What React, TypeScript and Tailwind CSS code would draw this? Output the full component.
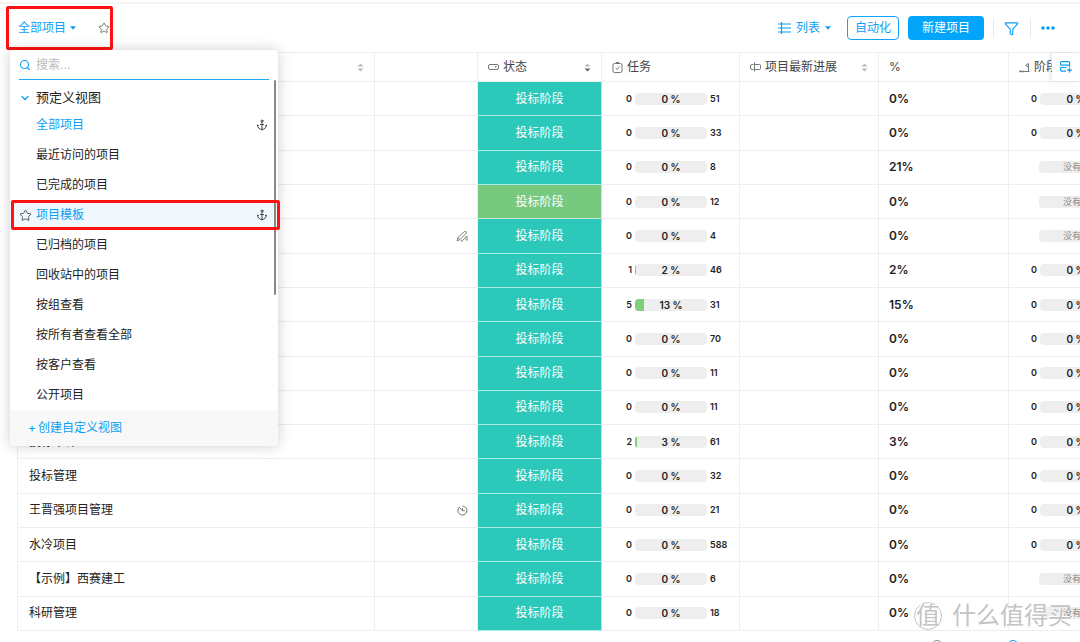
import { useState, type ReactNode } from 'react';
import { Anchor, ChevronDown, Filter, Search, Star } from 'lucide-react';

type Row = {
  name: string;
  done: number;
  percent: number;
  open: number;
  overall: number;
  stage: boolean;
  mark?: 'draft' | 'clock';
  tone?: 'green';
};

const ROWS: Row[] = [
  { name: '', done: 0, percent: 0, open: 51, overall: 0, stage: true },
  { name: '', done: 0, percent: 0, open: 33, overall: 0, stage: true },
  { name: '', done: 0, percent: 0, open: 8, overall: 21, stage: false },
  { name: '', done: 0, percent: 0, open: 12, overall: 0, stage: false, tone: 'green' },
  { name: '', done: 0, percent: 0, open: 4, overall: 0, stage: false, mark: 'draft' },
  { name: '', done: 1, percent: 2, open: 46, overall: 2, stage: true },
  { name: '', done: 5, percent: 13, open: 31, overall: 15, stage: true },
  { name: '', done: 0, percent: 0, open: 70, overall: 0, stage: true },
  { name: '', done: 0, percent: 0, open: 11, overall: 0, stage: true },
  { name: '', done: 0, percent: 0, open: 11, overall: 0, stage: true },
  { name: '投标审计', done: 2, percent: 3, open: 61, overall: 3, stage: true },
  { name: '投标管理', done: 0, percent: 0, open: 32, overall: 0, stage: true },
  { name: '王晋强项目管理', done: 0, percent: 0, open: 21, overall: 0, stage: true, mark: 'clock' },
  { name: '水冷项目', done: 0, percent: 0, open: 588, overall: 0, stage: true },
  { name: '【示例】西赛建工', done: 0, percent: 0, open: 6, overall: 0, stage: false },
  { name: '科研管理', done: 0, percent: 0, open: 18, overall: 0, stage: false },
];

const VIEWS = [
  '全部项目',
  '最近访问的项目',
  '已完成的项目',
  '项目模板',
  '已归档的项目',
  '回收站中的项目',
  '按组查看',
  '按所有者查看全部',
  '按客户查看',
  '公开项目',
];

const CELL = 'border-b border-r border-[#eee] p-0';

export default function App() {
  const [query, setQuery] = useState('');
  const [hovered, setHovered] = useState('项目模板');

  return (
    <div className="relative flex h-screen flex-col overflow-hidden bg-white font-['Inter','Noto_Sans_CJK_SC',sans-serif] text-xs text-[#222]">
      {/* Toolbar */}
      <header className="flex h-[52px] flex-shrink-0 flex-col">
        <div className="h-[4px] border-b-2 border-[#f5f5f5]" />
        <div className="flex flex-1 items-center pl-[6px] pr-[25px]">
          {/* View switcher with its dropdown */}
          <div className="relative flex h-[44px] w-[107px] items-center justify-between rounded-xs border-[3px] border-[#ff1111] pl-[9px]">
            <button type="button" className="flex items-center gap-1 text-[#0a9ff5]">
              全部项目
              <Caret />
            </button>
            <button type="button" aria-label="收藏">
              <Star size={12} strokeWidth={1.8} className="text-[#666]" />
            </button>
            <ViewMenu query={query} onQuery={setQuery} active={hovered} onHover={setHovered} />
          </div>

          <div className="ml-auto flex items-center">
            <button type="button" className="flex items-center gap-[5px] text-[#0a9ff5]">
              <ListIcon />
              列表
              <Caret />
            </button>
            <button
              type="button"
              className="ml-4 h-6 rounded border border-[#12a5f7] px-[7px] text-[#0a9ff5]"
            >
              自动化
            </button>
            <button type="button" className="ml-[9px] h-6 rounded bg-[#03a5fb] px-[14px] text-white">
              新建项目
            </button>
            <span className="ml-[9px] h-5 w-px bg-[#ececec]" />
            <button type="button" aria-label="筛选" className="ml-[10px] text-[#0a9ff5]">
              <Filter size={15} strokeWidth={1.8} />
            </button>
            <span className="ml-[11px] h-5 w-px bg-[#ececec]" />
            <button type="button" aria-label="更多" className="ml-[10px] text-[#0a9ff5]">
              <svg width="14" height="4" viewBox="0 0 14 4" fill="currentColor">
                <circle cx="2" cy="2" r="1.8" />
                <circle cx="7" cy="2" r="1.8" />
                <circle cx="12" cy="2" r="1.8" />
              </svg>
            </button>
          </div>
        </div>
      </header>

      {/* Project table */}
      <main className="relative ml-[17px] min-h-0 flex-1 overflow-hidden">
        <table className="h-full w-[calc(100%+67px)] table-fixed border-separate border-spacing-0 border-l border-t border-[#eee]">
          <colgroup>
            <col />
            <col className="w-[103px]" />
            <col className="w-[124px]" />
            <col className="w-[138px]" />
            <col className="w-[139px]" />
            <col className="w-[130px]" />
            <col className="w-[138px]" />
          </colgroup>
          <thead>
            <tr className="h-[29px] text-left text-[#444]">
              <HeadCell sort="both" />
              <HeadCell />
              <HeadCell icon={<StatusIcon />} label="状态" sort="down" />
              <HeadCell icon={<TaskIcon />} label="任务" />
              <HeadCell icon={<FieldIcon />} label="项目最新进展" sort="both" />
              <HeadCell label="%" />
              <HeadCell icon={<PhaseIcon />} label="阶段" />
            </tr>
          </thead>
          <tbody>
            {ROWS.map((row, i) => (
              <tr key={i}>
                <td className={`${CELL} pl-[11px]!`}>{row.name}</td>
                <td className={`${CELL} pr-[9px]!`}>
                  <div className="flex justify-end text-[#777]">
                    {row.mark === 'draft' && <DraftIcon />}
                    {row.mark === 'clock' && <ClockIcon />}
                  </div>
                </td>
                <td
                  className={`border-b border-r border-white/60 p-0 text-center text-white ${
                    row.tone === 'green' ? 'bg-[#76c97e]' : 'bg-[#2cc8ba]'
                  }`}
                >
                  投标阶段
                </td>
                <td className={CELL}>
                  <Progress done={row.done} percent={row.percent} open={row.open} />
                </td>
                <td className={CELL} />
                <td className={`${CELL} pl-[10px]! font-semibold`}>{row.overall}%</td>
                <td className={CELL}>
                  {row.stage ? (
                    <Progress done={0} percent={0} />
                  ) : (
                    <div className="ml-[30px] h-3 w-[72px] rounded bg-[#eee] pl-6 text-[9px] leading-3 text-[#888]">
                      没有
                    </div>
                  )}
                </td>
              </tr>
            ))}
          </tbody>
        </table>
        {/* Column settings, pinned over the last header cell */}
        <button
          type="button"
          aria-label="管理列"
          className="absolute right-0 top-px flex h-7 w-7 items-center bg-white pl-2 text-[#0a9ff5] shadow-[-2px_0_4px_rgba(0,0,0,0.1)]"
        >
          <ColumnsIcon />
        </button>
      </main>

      {/* Bottom bar, mostly below the fold */}
      <footer className="flex h-[11px] flex-shrink-0 items-start justify-end gap-16 overflow-hidden pr-[61px] pt-[9px]">
        <span className="h-3 w-3 flex-shrink-0 rounded-full border border-[#888]" />
        <span className="h-3 w-3 flex-shrink-0 rounded-full border border-[#0a9ff5]" />
      </footer>

      <Watermark />
    </div>
  );
}

// --- view menu ---------------------------------------------------------------

function ViewMenu({
  query,
  onQuery,
  active,
  onHover,
}: {
  query: string;
  onQuery: (v: string) => void;
  active: string;
  onHover: (v: string) => void;
}) {
  return (
    <div className="absolute left-px top-[41px] z-10 w-[268px] rounded bg-white shadow-[0_0_14px_rgba(0,0,0,0.2)]">
      <label className="mx-[9px] flex h-[30px] items-center gap-[5px] border-b border-[#1ea7f5]">
        <Search size={12} strokeWidth={2.2} className="flex-shrink-0 text-[#0a9ff5]" />
        <input
          type="text"
          value={query}
          onChange={(e) => onQuery(e.target.value)}
          placeholder="搜索..."
          aria-label="搜索"
          className="w-full bg-transparent outline-none placeholder:text-[#bbb]"
        />
      </label>
      <div className="relative">
        <button type="button" className="flex h-[30px] w-full items-center gap-[5px] pl-[9px] pt-1.5 text-[13px]">
          <ChevronDown size={12} strokeWidth={2.5} className="text-[#0a9ff5]" />
          预定义视图
        </button>
        <ul>
          {VIEWS.map((view) => {
            const current = view === '全部项目';
            const isActive = view === active;
            return (
              <li key={view} className="relative">
                <button
                  type="button"
                  onMouseEnter={() => onHover(view)}
                  className={`flex h-[30px] w-full items-center pl-[9px] pr-[10px] ${
                    isActive ? 'bg-[#f0f8fe]' : ''
                  } ${isActive || current ? 'text-[#0a9ff5]' : ''}`}
                >
                  <span className="w-[17px] text-[#555]">
                    {isActive && <Star size={13} strokeWidth={1.8} />}
                  </span>
                  {view}
                  {(isActive || current) && (
                    <Anchor size={12} strokeWidth={2} className="ml-auto text-[#444]" />
                  )}
                </button>
                {isActive && (
                  <span className="pointer-events-none absolute inset-y-0 -right-0.5 left-px z-10 rounded-xs border-[3px] border-[#ff1111]" />
                )}
              </li>
            );
          })}
        </ul>
        {/* Scroll thumb */}
        <span className="absolute right-0.5 top-0 h-[215px] w-0.5 rounded bg-[#888]" />
      </div>
      <button
        type="button"
        className="flex h-9 w-full items-center gap-0.5 rounded-b bg-[#f8f8f8] pl-[18px] text-[#0a9ff5]"
      >
        <span>+</span>
        <span>创建自定义视图</span>
      </button>
    </div>
  );
}

// --- table parts ---------------------------------------------------------------

function HeadCell({
  icon,
  label,
  sort,
}: {
  icon?: ReactNode;
  label?: string;
  sort?: 'both' | 'down';
}) {
  return (
    <th className={`${CELL} font-normal`}>
      <div className="flex items-center gap-1 px-[10px]">
        {icon && <span className="flex-shrink-0 text-[#777]">{icon}</span>}
        <span className="whitespace-nowrap">{label}</span>
        {sort && (
          <svg width="7" height="9" viewBox="0 0 7 9" className="ml-auto">
            <path d="M3.5 0.5L6.500 3.5h-6z" fill="#bbb" />
            <path d="M3.5 8.5L6.500 5.5h-6z" fill={sort === 'down' ? '#666' : '#bbb'} />
          </svg>
        )}
      </div>
    </th>
  );
}

/** Done count, bar with the percentage on it, open count. */
function Progress({ done, percent, open }: { done: number; percent: number; open?: number }) {
  return (
    <div className="flex items-center gap-[3px] text-[9px] font-semibold">
      <span className={open === undefined ? 'w-7 text-right' : 'w-[30px] text-right'}>{done}</span>
      <div className="relative h-3 w-[72px] flex-shrink-0 overflow-hidden rounded bg-[#eee]">
        <div className="h-full bg-[#7fce7a]" style={{ width: `${percent}%` }} />
        <span className="absolute inset-0 text-center text-[10px] leading-3">{percent} %</span>
      </div>
      <span>{open}</span>
    </div>
  );
}

function Watermark() {
  return (
    <div className="pointer-events-none absolute bottom-2 right-2 flex items-center gap-2.5 text-2xl leading-9 text-[#c4c4c4] [text-shadow:-1px_-1px_0_#fff]">
      <span className="flex h-7 w-7 items-center justify-center rounded-full border border-[#c4c4c4]">
        值
      </span>
      <span>什么值得买</span>
    </div>
  );
}

// --- icons ---------------------------------------------------------------

function Caret() {
  return (
    <svg width="6" height="4" viewBox="0 0 6 4" fill="currentColor">
      <path d="M0 0.3h6L3 3.8z" />
    </svg>
  );
}

function ListIcon() {
  return (
    <svg width="13" height="12" viewBox="0 0 13 12" fill="none" stroke="currentColor" strokeWidth="1.2">
      <path d="M0 2h13M0 6h13M0 10h13M3.500 0v12" />
    </svg>
  );
}

function StatusIcon() {
  return (
    <svg width="11" height="10" viewBox="0 0 11 10" fill="none" stroke="currentColor">
      <rect x="0.5" y="2.5" width="10" height="5" rx="1.5" />
      <path d="M6.5 4.3h2.400L7.700 6z" fill="currentColor" stroke="none" />
    </svg>
  );
}

function TaskIcon() {
  return (
    <svg width="11" height="11" viewBox="0 0 11 11" fill="none" stroke="currentColor">
      <rect x="1" y="1.500" width="9" height="9" rx="1.500" />
      <path d="M3.500 1.500h4M3.700 6l1.500 1.500 2.300-3M4 0.500h3" />
    </svg>
  );
}

function FieldIcon() {
  return (
    <svg width="11" height="10" viewBox="0 0 11 10" fill="none" stroke="currentColor">
      <path d="M3.500 2.500H2A1.500 1.500 0 0 0 .5 4v2A1.500 1.500 0 0 0 2 7.500h1.500M4.500 0.500v9M4.500 2.500h5a1 1 0 0 1 1 1v3a1 1 0 0 1-1 1h-5" />
    </svg>
  );
}

function PhaseIcon() {
  return (
    <svg width="11" height="11" viewBox="0 0 11 11" fill="none" stroke="currentColor">
      <path d="M0.500 9.500h10M9.500 9.500V1.500L6.500 3.500l3 1.500M1 8v2.500M4 8.500v2" />
    </svg>
  );
}

function ColumnsIcon() {
  return (
    <svg width="12" height="12" viewBox="0 0 12 12" fill="none" stroke="currentColor" strokeWidth="1.2">
      <rect x="0.600" y="0.600" width="9" height="3.600" rx="1" />
      <path d="M9.600 4.200v1.800M6.500 6.500H1.600a1 1 0 0 0-1 1v1.600a1 1 0 0 0 1 1H6M9.500 6.800v4.800M7.100 9.200h4.800" />
    </svg>
  );
}

function DraftIcon() {
  return (
    <svg width="12" height="12" viewBox="0 0 12 12" fill="none" stroke="currentColor" strokeWidth="0.9">
      <path d="M1 11l1-3.500L8.500 1.500Q10.500 1 10.500 3L4 9.500zM6 11L11 6v4.500L9 8.500M2 7.500l2 2M4.500 11h2" />
    </svg>
  );
}

function ClockIcon() {
  return (
    <svg width="11" height="11" viewBox="0 0 11 11" fill="none" stroke="currentColor">
      <path d="M3 1.700A4.500 4.500 0 1 0 5.500 1M5.500 3.200v2.500h2.300M2.500 2.500l3 3.200" />
    </svg>
  );
}
